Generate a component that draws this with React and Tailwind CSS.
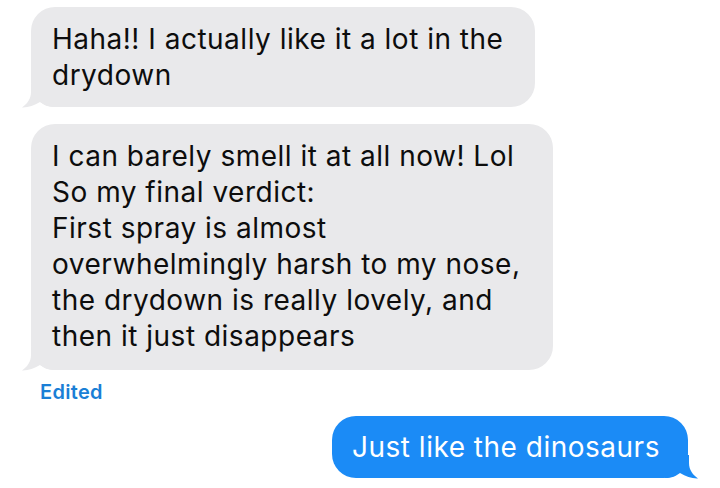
import React from "react";

const Tail = ({ color, flip }) => (
  <svg
    width="34"
    height="24"
    viewBox="0 0 34 24"
    className={
      flip
        ? "absolute right-[-11px] bottom-[-1px] -scale-x-100"
        : "absolute left-[-10px] bottom-[-1px]"
    }
  >
    <path
      d="M10 0 L10 8 C10 15 6 20 1 23.5 C7 23.8 13 21.5 19 18 C23 21 27 23 34 23 L34 0 Z"
      fill={color}
    />
  </svg>
);

const GreyBubble = ({ lines, className }) => (
  <div className={"relative rounded-[24px] bg-[#e9e9eb] " + className}>
    <Tail color="#e9e9eb" />
    <div className="relative px-[21px] py-[14px] text-[28px] leading-[36px] text-[#0d0d0d] tracking-[0.5px]">
      {lines.map((l, i) => (
        <div key={i} className="whitespace-nowrap">
          {l}
        </div>
      ))}
    </div>
  </div>
);

export default function App() {
  return (
    <div className="w-[720px] h-[488px] bg-white pt-[7px] pl-[31px] pr-[32px] flex flex-col overflow-hidden font-['Inter','Liberation_Sans',sans-serif]">
      <GreyBubble
        className="w-[504px] h-[100px]"
        lines={["Haha!! I actually like it a lot in the", "drydown"]}
      />
      <GreyBubble
        className="w-[522px] h-[246px] mt-[17px]"
        lines={[
          "I can barely smell it at all now! Lol",
          "So my final verdict:",
          "First spray is almost",
          "overwhelmingly harsh to my nose,",
          "the drydown is really lovely, and",
          "then it just disappears",
        ]}
      />
      <div className="mt-[10px] ml-[9px] text-[20px] leading-[24px] font-semibold text-[#1a7fd6] tracking-[0.3px]">
        Edited
      </div>
      <div className="relative self-end mt-[12px] w-[356px] h-[62px] rounded-[24px] bg-[#1b8bf6]">
        <Tail color="#1b8bf6" flip />
        <div className="relative px-[20px] py-[13px] text-[28px] leading-[36px] text-white whitespace-nowrap tracking-[0.5px]">
          Just like the dinosaurs
        </div>
      </div>
    </div>
  );
}
